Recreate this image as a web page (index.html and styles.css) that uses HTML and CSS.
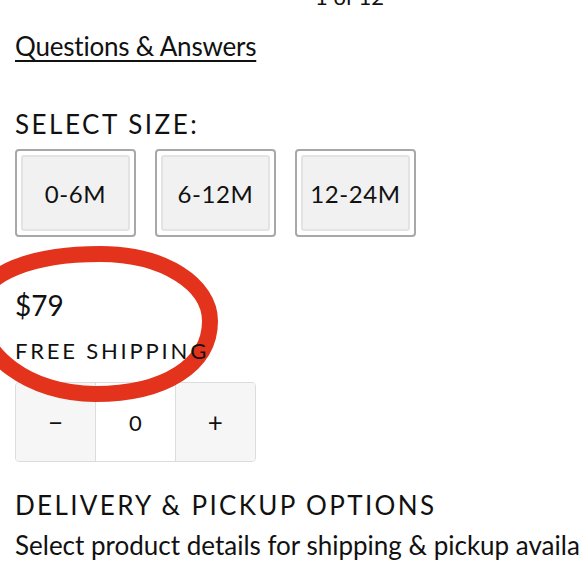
FILE: index.html
```html
<!DOCTYPE html>
<html>
<head>
<meta charset="utf-8">
<link rel="stylesheet" href="styles.css">
</head>
<body>
<div class="page">
  <div class="pager">1 of 12</div>
  <a class="qa" href="#">Questions &amp; Answers</a>
  <h2 class="label">SELECT SIZE:</h2>
  <div class="sizes">
    <button class="size"><span class="size-inner">0-6M</span></button>
    <button class="size"><span class="size-inner">6-12M</span></button>
    <button class="size"><span class="size-inner">12-24M</span></button>
  </div>
  <div class="price-block">
    <svg class="circle" width="260" height="190" viewBox="0 0 260 190">
      <path d="M 8 80 C 8 42, 65 24, 130 24 C 195 24, 240 55, 240 91 C 240 135, 195 164, 125 164 C 60 164, 8 125, 8 80 Z" fill="none" stroke="#e3331c" stroke-width="16"/>
    </svg>
    <div class="price">$79</div>
    <div class="shipping">FREE SHIPPING</div>
  </div>
  <div class="stepper">
    <button class="step">&minus;</button>
    <div class="qty">0</div>
    <button class="step">+</button>
  </div>
  <h2 class="label delivery">DELIVERY &amp; PICKUP OPTIONS</h2>
  <p class="note">Select product details for shipping &amp; pickup availability</p>
</div>
</body>
</html>
```
FILE: styles.css
```css
html, body {
  margin: 0;
  padding: 0;
  background: #fff;
  overflow: hidden;
}
body {
  font-family: "Lato", "DejaVu Sans", sans-serif;
  color: #111;
}
.page {
  width: 580px;
  height: 580px;
  overflow: hidden;
  padding-left: 15px;
  box-sizing: border-box;
}
.pager {
  font-size: 22px;
  line-height: 24px;
  margin-top: -15px;
  padding-left: 300px;
  white-space: nowrap;
}
.qa {
  display: inline-block;
  margin-top: 21px;
  font-size: 26px;
  line-height: 32px;
  letter-spacing: -0.2px;
  color: #111;
  text-decoration: underline;
  text-decoration-thickness: 2px;
  text-underline-offset: 4px;
}
.label {
  margin: 47px 0 0;
  font-size: 26px;
  line-height: 30px;
  font-weight: 400;
  letter-spacing: 2.5px;
  white-space: nowrap;
}
.sizes {
  display: flex;
  gap: 19px;
  margin-top: 10px;
}
.size {
  width: 121px;
  height: 88px;
  padding: 4px;
  border: 2px solid #a8a8a8;
  border-radius: 4px;
  background: #fff;
  box-sizing: border-box;
  font: inherit;
  color: inherit;
  display: flex;
}
.size-inner {
  flex: 1;
  display: flex;
  align-items: center;
  justify-content: center;
  background: #f1f1f1;
  border: 2px solid #e3e3e3;
  border-radius: 3px;
  font-size: 24px;
  letter-spacing: 0.6px;
}
.price-block {
  position: relative;
  z-index: 1;
  margin-top: 51px;
}
.price {
  position: relative;
  font-size: 28px;
  line-height: 34px;
}
.shipping {
  position: relative;
  margin-top: 16px;
  font-size: 22px;
  line-height: 26px;
  letter-spacing: 2.8px;
  white-space: nowrap;
}
.circle {
  position: absolute;
  left: -45px;
  top: -58px;
  pointer-events: none;
  filter: blur(0.6px);
}
.stepper {
  display: flex;
  width: 241px;
  height: 80px;
  margin-top: 18px;
  border: 1px solid #dcdcdc;
  border-radius: 4px;
  box-sizing: border-box;
  overflow: hidden;
}
.step {
  width: 80px;
  border: 0;
  background: #f6f6f6;
  font: inherit;
  font-size: 26px;
  color: #111;
  padding: 0;
}
.qty {
  width: 79px;
  border-left: 1px solid #dcdcdc;
  border-right: 1px solid #dcdcdc;
  display: flex;
  align-items: center;
  justify-content: center;
  font-size: 22px;
  background: #fff;
}
.delivery {
  margin-top: 28px;
  letter-spacing: 2.35px;
}
.note {
  margin: 9px 0 0;
  font-size: 26px;
  line-height: 32px;
  white-space: nowrap;
}
```
